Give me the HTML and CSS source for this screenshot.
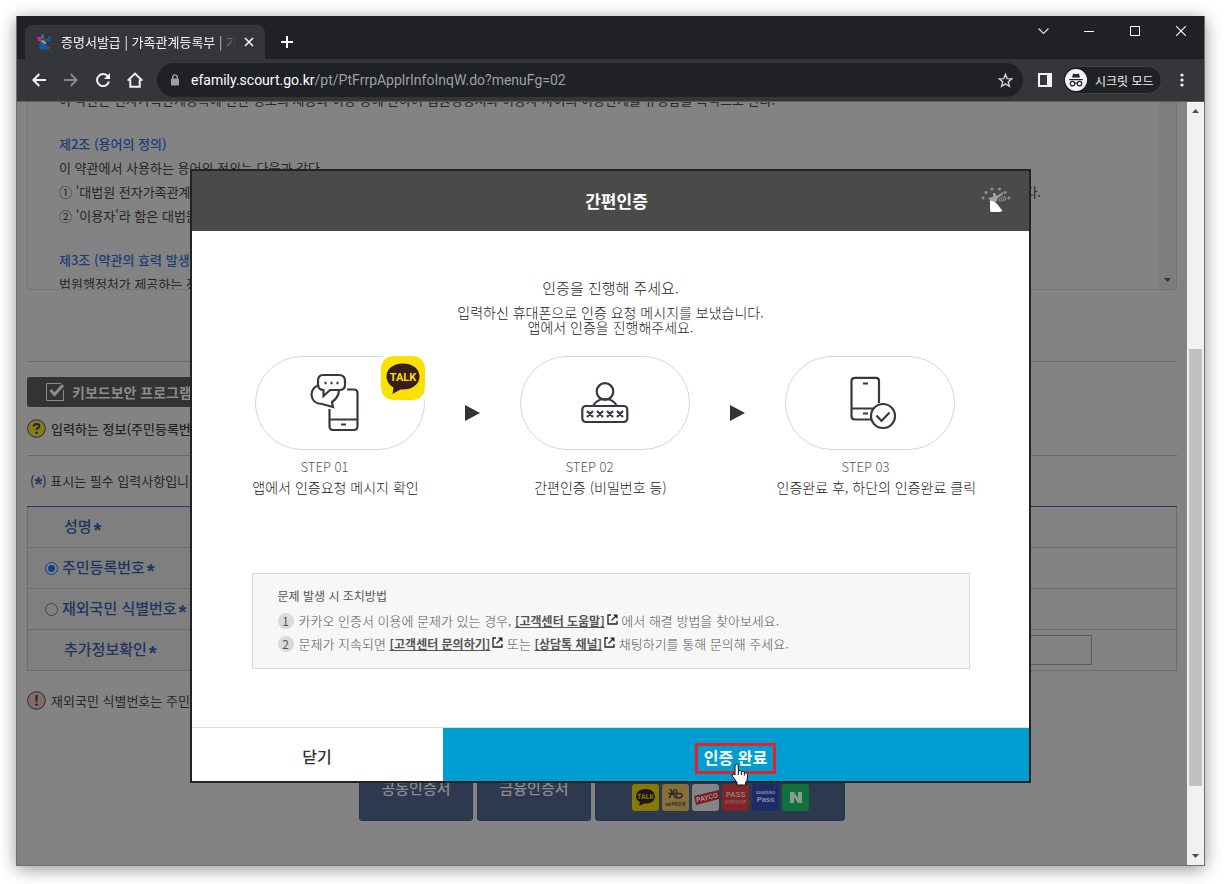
FILE: index.html
```html
<!DOCTYPE html>
<html lang="ko">
<head>
<meta charset="utf-8">
<title>증명서발급 | 가족관계등록부</title>
<link rel="stylesheet" href="styles.css">
</head>
<body>
<div class="desktop">
<div class="window">
  <header class="titlebar">
    <div class="tab">
      <svg class="favicon" width="16" height="16" viewBox="0 0 16 16"><path d="M3 8L7 8L9 11L12.500 13V15.500H3L2 12Z" fill="#0b5fa8"/><path d="M6 5L10 5L12 2L14 3L12 6L9 8Z" fill="#0b5fa8"/><path d="M12 1.500L14 4.500M10 6.500H14" stroke="#0b5fa8" stroke-width="1.200"/><path d="M0 3L4 3L5 7L1 7Z" fill="#e6178c"/><path d="M4 1L6.500 0L7 4L4.500 5Z" fill="#12908c"/><path d="M3.500 7L6 6L9.500 9L8.500 10.500Z" fill="#e88a55"/></svg>
      <span class="tab-title">증명서발급 | 가족관계등록부 | 가족</span>
      <button class="icon-btn tab-close" aria-label="탭 닫기"><svg width="10" height="10" viewBox="0 0 10 10" stroke="#f1f3f4" stroke-width="1.6"><path d="M1 1L9 9M9 1L1 9"/></svg></button>
    </div>
    <button class="icon-btn new-tab" aria-label="새 탭"><svg width="12" height="12" viewBox="0 0 12 12" stroke="#fff" stroke-width="2"><path d="M6 0V12M0 6H12"/></svg></button>
    <div class="caption-btns">
      <button class="icon-btn" aria-label="탭 검색"><svg width="11" height="7" viewBox="0 0 11 7" fill="none" stroke="#ddd" stroke-width="1.2"><path d="M.5 .5L5.5 5.5L10.5 .5"/></svg></button>
      <button class="icon-btn" aria-label="최소화"><svg width="10" height="10" viewBox="0 0 10 10" fill="#fff"><path d="M0 5H10V6H0Z"/></svg></button>
      <button class="icon-btn" aria-label="최대화"><svg width="10" height="10" viewBox="0 0 10 10" fill="none" stroke="#fff"><path d="M.5 .5H9.5V9.5H.5Z"/></svg></button>
      <button class="icon-btn" aria-label="닫기"><svg width="10" height="10" viewBox="0 0 10 10" stroke="#fff" stroke-width="1.1"><path d="M0 0L10 10M10 0L0 10"/></svg></button>
    </div>
  </header>
  <nav class="toolbar">
    <button class="icon-btn nav-btn" aria-label="뒤로"><svg width="14" height="14" viewBox="0 0 14 14" fill="none" stroke="#f1f3f4" stroke-width="2"><path d="M14 7H1.5M7.3 1L1.4 7L7.3 13"/></svg></button>
    <button class="icon-btn nav-btn" aria-label="앞으로"><svg width="14" height="14" viewBox="0 0 14 14" fill="none" stroke="#85868a" stroke-width="2"><path d="M0 7H12.5M6.7 1L12.6 7L6.7 13"/></svg></button>
    <button class="icon-btn nav-btn" aria-label="새로고침"><svg width="14" height="14" viewBox="0 0 14 14"><path d="M12 3.6A6 6 0 1 0 12.9 8.6" fill="none" stroke="#f1f3f4" stroke-width="2"/><path d="M14 0V6H8Z" fill="#f1f3f4"/></svg></button>
    <button class="icon-btn nav-btn" aria-label="홈"><svg width="16" height="16" viewBox="0 0 16 16" fill="none" stroke="#f1f3f4" stroke-width="2"><path d="M.7 8.6L8 1.6L15.3 8.6M3.3 7.5V14.8H12.7V7.5"/></svg></button>
    <div class="omnibox">
      <svg width="10" height="12" viewBox="0 0 10 12"><rect x="1" y="4.5" width="8" height="7" rx="1" fill="#9aa0a6"/><path d="M2.7 5V3.2a2.3 2.3 0 0 1 4.6 0V5" fill="none" stroke="#9aa0a6" stroke-width="1.4"/></svg>
      <span class="url"><b>efamily.scourt.go.kr</b>/pt/PtFrrpApplrInfoInqW.do?menuFg=02</span>
      <button class="icon-btn star" aria-label="북마크"><svg width="15" height="15" viewBox="0 0 15 15" fill="none" stroke="#d2d4d7" stroke-width="1.4"><path d="M7.5 1.4L9.2 5.6L13.8 5.9L10.3 8.8L11.4 13.3L7.5 10.9L3.6 13.3L4.7 8.8L1.2 5.9L5.8 5.6Z"/></svg></button>
    </div>
    <button class="icon-btn side" aria-label="측면 패널"><svg width="14" height="14" viewBox="0 0 14 14"><path d="M0 0H14V14H0ZM2 2V12H9V2Z" fill="#f1f3f4" fill-rule="evenodd"/></svg></button>
    <div class="incognito">
      <svg width="22" height="22" viewBox="0 0 22 22"><circle cx="11" cy="11" r="11" fill="#f1f3f4"/><path d="M7 8.5L8.2 4.6L10 5L11 5.2L12 5L13.8 4.6L15 8.5Z" fill="#202124"/><path d="M4.3 10.6H17.7" stroke="#202124" stroke-width="1.2"/><g fill="none" stroke="#202124" stroke-width="1.2"><circle cx="7.5" cy="14.6" r="2.3"/><circle cx="14.5" cy="14.6" r="2.3"/><path d="M9.8 14.4Q11 13.6 12.2 14.4"/></g></svg>
      <span>시크릿 모드</span>
    </div>
    <button class="icon-btn more" aria-label="메뉴"><svg width="4" height="14" viewBox="0 0 4 14" fill="#f1f3f4"><circle cx="2" cy="2" r="1.6"/><circle cx="2" cy="7" r="1.6"/><circle cx="2" cy="12" r="1.6"/></svg></button>
  </nav>

  <div class="viewport">
    <main class="page">
      <section class="terms">
        <div class="terms-text">
          <p class="first">이 약관은 전자가족관계등록에 관한 정보의 제공과 이용 등에 관하여 법원행정처와 이용자 사이의 이용관계를 규정함을 목적으로 한다.</p>
          <h3>제2조 (용어의 정의)</h3>
          <p>이 약관에서 사용하는 용어의 정의는 다음과 같다.</p>
          <p class="split"><span>① '대법원 전자가족관계등록시스템'이라 함은</span><span>말한다.</span></p>
          <p>② '이용자'라 함은 대법원 전자가족관계등록시스템을 이용하는 자를 말한다.</p>
          <h3>제3조 (약관의 효력 발생)</h3>
          <p>법원행정처가 제공하는 전자가족관계등록시스템</p>
        </div>
        <div class="terms-bar"><svg width="7" height="4" viewBox="0 0 7 4"><path d="M0 0H7L3.5 4Z" fill="#333"/></svg></div>
      </section>
      <hr>
      <button class="key-btn"><svg width="18" height="18" viewBox="0 0 18 18" fill="none"><path d="M15 .5H.5V17.5H17.5V7" stroke="#8c8c8c"/><path d="M4.5 7L8.5 11.5L17 2" stroke="#8c8c8c" stroke-width="3"/></svg>키보드보안 프로그램 설치/해제</button>
      <p class="notice strong"><svg width="19" height="19" viewBox="0 0 19 19"><circle cx="9.5" cy="9.5" r="8.8" fill="#857c20" stroke="#2b2b2b"/><path d="M6.6 7.4Q6.8 4.9 9.6 4.9Q12.4 5 12.3 7.2Q12.2 8.4 10.8 9.2Q9.6 9.9 9.6 11" fill="none" stroke="#222" stroke-width="2"/><circle cx="9.6" cy="13.7" r="1.2" fill="#222"/></svg>입력하는 정보(주민등록번호 등)</p>
      <hr class="second">
      <p class="required">(<span class="req">*</span>) 표시는 필수 입력사항입니다.</p>
      <table class="form">
        <tr><th class="plain" scope="row">성명<span class="req">*</span></th><td></td></tr>
        <tr><th scope="row"><input type="radio" name="idtype" id="id-rrn" checked><label for="id-rrn">주민등록번호<span class="req">*</span></label></th><td></td></tr>
        <tr><th scope="row"><input type="radio" name="idtype" id="id-over"><label for="id-over">재외국민 식별번호<span class="req">*</span></label></th><td></td></tr>
        <tr><th class="plain" scope="row"><label for="extra">추가정보확인<span class="req">*</span></label></th><td><input class="field" type="text" id="extra"></td></tr>
      </table>
      <p class="notice info"><svg width="19" height="19" viewBox="0 0 19 19"><circle cx="9.5" cy="9.5" r="8.8" fill="#856a6a" stroke="#2b2b2b"/><path d="M8.3 4.3H10.7L10.2 11.3H8.8Z" fill="#222"/><circle cx="9.5" cy="13.6" r="1.2" fill="#222"/></svg>재외국민 식별번호는 주민등록번호</p>
      <div class="cert-btns">
        <button class="cert">공동인증서</button>
        <button class="cert">금융인증서</button>
        <button class="cert wide">
          <svg width="27" height="27" viewBox="0 0 27 27"><rect width="27" height="27" rx="3" fill="#857a08"/><path d="M13.500 5C7.500 5 4 8.500 4 12.500Q4 16 8 18L7 22L12 19.500C19 20 23 17 23 12.500C23 8.500 19.500 5 13.500 5Z" fill="#221518"/><text x="13.500" y="15" font-size="7" class="logo" fill="#857a08">TALK</text></svg>
          <svg width="27" height="27" viewBox="0 0 27 27"><rect width="27" height="27" rx="3" fill="#857038"/><path d="M6 9.500H14M8 5L13.500 14M13 5L7 14M14.500 5.500V14M14.500 9.500H18Q20.500 10 20 12T17 14H14.500" fill="none" stroke="#302b24" stroke-width="1.500"/><text x="13.500" y="22" font-size="4" class="logo" fill="#302b24">KB국민은행</text></svg>
          <svg width="27" height="27" viewBox="0 0 27 27"><rect width="27" height="27" rx="3" fill="#858585"/><path d="M2 12L27 6V15L4 21Z" fill="#7c1b20"/><text x="15" y="16" font-size="7" class="logo" fill="#999" transform="rotate(-13 15 14)">PAYCO</text></svg>
          <svg width="27" height="27" viewBox="0 0 27 27"><rect width="27" height="27" rx="3" fill="#7d2529"/><text x="13.500" y="13" font-size="8" class="logo" fill="#9a7676">PASS</text><text x="13.500" y="20" font-size="4" class="logo thin" fill="#9a7676">휴대전화인증</text></svg>
          <svg width="27" height="27" viewBox="0 0 27 27"><rect width="27" height="27" rx="3" fill="#1d2b69"/><text x="13.500" y="10" font-size="4" class="logo" fill="#858ba0">SAMSUNG</text><text x="13.500" y="18" font-size="8" class="logo" fill="#858ba0">Pass</text></svg>
          <svg width="27" height="27" viewBox="0 0 27 27"><rect width="27" height="27" rx="3" fill="#11713c"/><path d="M8 8H12L16 14V8H20V19H16L12 13V19H8Z" fill="#8b9a90"/></svg>
        </button>
      </div>
    </main>
    <div class="scrollbar">
      <svg width="7" height="4" viewBox="0 0 7 4"><path d="M0 4H7L3.500 0Z" fill="#505050"/></svg>
      <div class="track"><div class="thumb"></div></div>
      <svg width="7" height="4" viewBox="0 0 7 4"><path d="M0 0H7L3.500 4Z" fill="#505050"/></svg>
    </div>

    <section class="modal" role="dialog" aria-label="간편인증">
      <header class="modal-head">
        <h2>간편인증</h2>
        <svg class="mark" width="30" height="28" viewBox="0 0 30 28"><path d="M9 15L13 16L17 20L21.500 26L19 27H9.500L9 24Z" fill="#fff"/><path d="M7 13L12 12L12 8L14.500 8L15 11L21 8L24 6.500L17 13L15 17L10 16Z" fill="#a5a5a5"/><g fill="#8f8f8f"><circle cx="2" cy="13" r="1.600"/><circle cx="5" cy="7.500" r="1.600"/><circle cx="11" cy="4" r="1.600"/><circle cx="18.500" cy="4" r="1.600"/><circle cx="24" cy="7.500" r="1.600"/><circle cx="28" cy="13" r="1.600"/></g><path d="M21 7V12M18 16L19.500 12L22 16ZM22 15L23.500 11L25 15Z" fill="none" stroke="#888"/></svg>
      </header>
      <div class="modal-body">
        <p class="lead">인증을 진행해 주세요.</p>
        <p class="sub">입력하신 휴대폰으로 인증 요청 메시지를 보냈습니다.<br>앱에서 인증을 진행해주세요.</p>
        <ol class="steps">
          <li class="step">
            <div class="pill send">
              <svg width="50" height="60" viewBox="0 0 50 60" fill="none" stroke="#343a40" stroke-width="2.200"><path d="M37 17.500H44Q47.500 17.500 47.500 21V54Q47.500 58 44 58H23Q19.500 58 19.500 54V37M19.500 47.500H47.500M31 52.500H36"/><path d="M13 3H29Q35 3 35 9V13Q35 18 29 18H20L13.500 24V18Q8 18 8 12V9Q8 3 13 3Z"/><path d="M8 13.500C4 15 1.500 18 1.500 23Q2.500 32 12 32L23 35L22 30Q28 26 29 19"/><path d="M14.500 11H16.500M20.500 11H22.500M26.500 11H28.500" stroke-width="2.500"/></svg>
              <svg class="talk" width="44" height="44" viewBox="0 0 44 44"><rect width="44" height="44" rx="12" fill="#fae100"/><path d="M22 7.500C12 7.500 5.500 13 5.500 20.500C5.500 25 8 29 12.500 31.500L11.500 38L19.500 33.500C30 34.500 38.500 29 38.500 20.500C38.500 13 32 7.500 22 7.500Z" fill="#371d1e"/><text x="22" y="25" font-size="11" class="logo" fill="#fae100">TALK</text></svg>
            </div>
            <p class="no">STEP 01</p><p class="desc">앱에서 인증요청 메시지 확인</p>
          </li>
          <li class="arrow"><svg width="15" height="16" viewBox="0 0 15 16"><path d="M0 0L15 8L0 16Z" fill="#333"/></svg></li>
          <li class="step">
            <div class="pill">
              <svg width="50" height="44" viewBox="0 0 50 44" fill="none" stroke="#343a40" stroke-width="2.200"><circle cx="25" cy="10.500" r="8.300"/><path d="M13.500 24.500Q17 18 25 18T36.500 24.500"/><rect x="2.300" y="25" width="45" height="16" rx="3.500"/><path d="M7 30L13 36M13 30L7 36M17 30L23 36M23 30L17 36M27 30L33 36M33 30L27 36M37 30L43 36M43 30L37 36"/></svg>
            </div>
            <p class="no">STEP 02</p><p class="desc">간편인증 (비밀번호 등)</p>
          </li>
          <li class="arrow"><svg width="15" height="16" viewBox="0 0 15 16"><path d="M0 0L15 8L0 16Z" fill="#333"/></svg></li>
          <li class="step">
            <div class="pill check">
              <svg width="48" height="54" viewBox="0 0 48 54" fill="none" stroke="#343a40" stroke-width="2.200"><path d="M22 43.500H6Q2.500 43.500 2.500 40V5Q2.500 1.800 6 1.800H27Q30 1.800 30 5V27M2.500 32.500H24M14 7.500H19M14 37.500H19"/><circle cx="34" cy="40" r="12"/><path d="M27.500 39.500L32.500 45L40.500 36.500"/></svg>
            </div>
            <p class="no">STEP 03</p><p class="desc">인증완료 후, 하단의 인증완료 클릭</p>
          </li>
        </ol>
        <div class="tips">
          <p class="tips-title">문제 발생 시 조치방법</p>
          <p class="tip"><span class="num">1</span>카카오 인증서 이용에 문제가 있는 경우, <a href="#">[고객센터 도움말]</a><svg class="ext" width="11" height="11" viewBox="0 0 11 11" fill="none" stroke="#222" stroke-width="1.300"><path d="M4 1H1V10H10V7M4.500 6.500L9 2"/><path d="M6 .5H10.500V5Z" fill="#222" stroke="none"/></svg> 에서 해결 방법을 찾아보세요.</p>
          <p class="tip"><span class="num">2</span>문제가 지속되면 <a href="#">[고객센터 문의하기]</a><svg class="ext" width="11" height="11" viewBox="0 0 11 11" fill="none" stroke="#222" stroke-width="1.300"><path d="M4 1H1V10H10V7M4.500 6.500L9 2"/><path d="M6 .5H10.500V5Z" fill="#222" stroke="none"/></svg> 또는 <a href="#">[상담톡 채널]</a><svg class="ext" width="11" height="11" viewBox="0 0 11 11" fill="none" stroke="#222" stroke-width="1.300"><path d="M4 1H1V10H10V7M4.500 6.500L9 2"/><path d="M6 .5H10.500V5Z" fill="#222" stroke="none"/></svg> 채팅하기를 통해 문의해 주세요.</p>
        </div>
      </div>
      <footer class="modal-foot">
        <button class="close">닫기</button>
        <button class="confirm"><span class="focus">인증 완료<svg class="cursor" width="18" height="23" viewBox="0 0 18 23"><path d="M5.500 1Q7.300 1 7.300 3V8Q9.500 6.800 10.300 8.600Q12.500 7.600 13.300 9.700Q16 9 16.500 11.500V15Q16 18 14.500 19.500V22H6V19.500L1.500 13.500Q.5 11.500 2 11Q3 10.800 4 12V3Q4 1 5.500 1Z" fill="#fff" stroke="#111"/><path d="M7.400 8V12M10.400 9V12M13.400 10V12.500" stroke="#111"/></svg></span></button>
      </footer>
    </section>
  </div>
</div>
</div>
</body>
</html>
```
FILE: styles.css
```css
* { box-sizing: border-box; }
body { margin: 0; background: #fff; font-family: "Noto Sans CJK KR", "Noto Sans", sans-serif; }
p, h2, h3, ol { margin: 0; padding: 0; }
button { font: inherit; border: 0; padding: 0; cursor: pointer; }
svg { display: block; flex: none; }
.logo { font-family: Roboto, "Noto Sans CJK KR", sans-serif; font-weight: 700; text-anchor: middle; }
.logo.thin { font-weight: 400; }

.desktop { display: flex; min-height: 100vh; padding: 16px 19px 18px 16px; }
.window { flex: 1; min-width: 0; display: flex; flex-direction: column; border: 1px solid #6e6e6e; border-top-width: 0; box-shadow: 0 3px 16px rgba(0, 0, 0, .42); }
.icon-btn { display: flex; align-items: center; justify-content: center; background: none; }

.titlebar { display: flex; height: 43px; padding-left: 8px; background: #202124; }
.tab { display: flex; align-items: center; width: 240px; margin-top: 9px; padding: 0 10px 0 12px; border-radius: 8px 8px 0 0; background: #35363a; color: #f1f3f4; }
.tab-title { flex: 1; margin-left: 8px; overflow: hidden; white-space: nowrap; font-size: 13px; line-height: 20px; -webkit-mask-image: linear-gradient(90deg, #000 88%, transparent); mask-image: linear-gradient(90deg, #000 88%, transparent); }
.tab-close { width: 12px; height: 16px; margin-left: 7px; }
.new-tab { width: 28px; height: 28px; margin: 12px 0 0 8px; }
.caption-btns { display: flex; height: 30px; margin-left: auto; }
.caption-btns .icon-btn { width: 46px; }

.toolbar { display: flex; align-items: center; height: 43px; padding: 0 14px 0 6px; border-bottom: 1px solid #5b5c5f; background: #35363a; color: #f1f3f4; }
.nav-btn { width: 32px; height: 32px; }
.omnibox { flex: 1; display: flex; align-items: center; height: 34px; margin-left: 6px; padding: 0 10px 0 13px; border-radius: 17px; background: #202124; color: #9aa0a6; }
.url { flex: 1; margin-left: 11px; font-family: Roboto, sans-serif; font-size: 14px; line-height: 20px; white-space: nowrap; }
.url b { font-weight: 400; color: #fff; }
.star { width: 16px; height: 20px; }
.side { width: 14px; height: 20px; margin: 0 10px 0 15px; }
.incognito { display: flex; align-items: center; gap: 8px; width: 100px; height: 28px; padding-left: 2px; border: 1px solid #414246; border-radius: 14px; background: #202124; font-size: 12px; white-space: nowrap; }
.more { width: 16px; height: 20px; margin-left: 12px; }

.viewport { position: relative; flex: 1; display: flex; overflow: hidden; }
.page { flex: 1; min-width: 0; padding: 0 10px 44px; background: #838383; color: #262626; font-size: 13px; }
.terms { display: flex; height: 188px; overflow: hidden; border: 1px solid #747474; border-top: 0; border-radius: 0 0 4px 4px; }
.terms-text { flex: 1; padding: 0 118px 0 31px; line-height: 24px; white-space: nowrap; }
.terms-text .first { margin: -14px 0 20px; }
.terms-text h3 { font-size: 13px; font-weight: 500; color: #173f78; }
.terms-text p + h3 { margin-top: 20px; }
.split { display: flex; justify-content: space-between; }
.terms-bar { display: flex; align-items: flex-end; justify-content: center; width: 17px; padding-bottom: 7px; background: #7d7d7d; }
hr { height: 1px; margin: 71px 0 15px; border: 0; background: #6a6a6a; }
hr.second { margin: 13px 0 0; }
.key-btn { display: flex; align-items: center; gap: 8px; width: 280px; height: 30px; padding-left: 19px; border-radius: 3px; background: #333; color: #8c8c8c; font-size: 14px; font-weight: 700; }
.notice { display: flex; align-items: center; gap: 5px; height: 28px; }
.notice.strong { margin-top: 7px; font-weight: 500; }
.notice.info { margin: 15px 0 46px; }
.required { padding-left: 3px; line-height: 50px; }
.req { margin-left: 2px; color: #1e3560; font-family: "Liberation Sans", sans-serif; font-size: 20px; font-weight: 700; line-height: 0; vertical-align: -5px; }
.required .req { margin: 0; }
.form { width: 100%; border-collapse: collapse; border: 1px solid #6c6c6c; border-top-color: #203a6c; }
.form tr { height: 41px; border-top: 1px solid #6c6c6c; }
.form tr:first-child { border-top-color: #203a6c; }
.form th { width: 190px; padding: 0 0 2px 17px; background: #7f7f7f; color: #1e3560; font-size: 15px; font-weight: 500; line-height: 22px; text-align: left; white-space: nowrap; }
.form th.plain { padding-left: 36px; }
.form td { padding: 0 84px 0 0; text-align: right; }
.form input[type="radio"] { appearance: none; width: 13px; height: 13px; margin: 0 4px 0 0; border: 1px solid #444; border-radius: 50%; vertical-align: -2px; }
.form input[type="radio"]:checked { border-color: #0b4186; background: radial-gradient(circle, #0b4186 0 3px, transparent 4px); }
.field { display: inline-block; width: 300px; height: 30px; border: 1px solid #5c5c5c; background: #838383; vertical-align: middle; }
.cert-btns { display: flex; justify-content: center; gap: 4px; }
.cert { width: 114px; height: 61px; padding-bottom: 6px; border: 1px solid #26344f; border-radius: 3px; background: #2d394f; color: #8b8b8b; font-size: 15px; font-weight: 500; }
.cert.wide { display: flex; align-items: flex-end; justify-content: center; gap: 3px; width: 250px; padding-bottom: 9px; }

.scrollbar { display: flex; flex-direction: column; align-items: center; width: 17px; padding: 7px 0; background: #f1f1f1; }
.track { flex: 1; width: 13px; margin: 6px 0; }
.thumb { height: 60%; margin-top: 230px; background: #c1c1c1; }

.modal { position: absolute; top: 67px; left: 50%; width: 841px; margin-left: -421px; border: 2px solid #232323; background: #fff; color: #222; }
.modal-head { display: flex; align-items: center; justify-content: center; position: relative; height: 60px; background: #4a4a4a; color: #fff; }
.modal-head h2 { padding-left: 13px; font-size: 17px; font-weight: 700; line-height: 24px; }
.mark { position: absolute; right: 18px; top: 14px; }
.modal-body { padding: 45px 59px 58px 60px; }
.lead { font-size: 15px; font-weight: 300; line-height: 24px; text-align: center; }
.sub { margin-top: 5px; font-size: 14px; font-weight: 300; line-height: 15px; text-align: center; }
.steps { display: flex; justify-content: space-between; margin-top: 21px; padding: 0 15px 0 3px; list-style: none; }
.step { width: 170px; font-weight: 300; text-align: center; }
.pill { display: flex; align-items: center; justify-content: center; position: relative; height: 94px; margin-bottom: 7px; border: 1px solid #d6d6d6; border-radius: 47px; }
.pill.send { padding: 0 10px 2px 0; }
.pill.check { padding-left: 6px; }
.pill .talk { position: absolute; top: -1px; right: -1px; border-radius: 12px; box-shadow: 0 0 0 3px #fff; }
.no { padding-right: 22px; margin-left: -8px; color: #555; font-size: 13px; line-height: 20px; }
.step:last-child .no { padding-right: 0; }
.desc { margin-left: -8px; font-size: 14px; line-height: 20px; white-space: nowrap; }
.arrow { padding-top: 49px; }
.tips { margin-top: 76px; padding: 10px 25px 13px; border: 1px solid #d9d9d9; background: #f7f7f7; color: #555; }
.tips-title { margin-bottom: 2px; font-size: 12px; line-height: 23px; }
.tip { font-size: 13px; font-weight: 300; line-height: 23px; }
.tip a { color: #555; font-size: 12px; font-weight: 700; }
.num { display: inline-block; width: 16px; height: 16px; margin-right: 5px; border-radius: 50%; background: #dadada; font-size: 12px; font-weight: 400; line-height: 16px; text-align: center; }
.ext { display: inline-block; margin-left: 2px; vertical-align: 1px; }
.modal-foot { display: flex; border-top: 1px solid #ddd; }
.modal-foot button { height: 53px; font-size: 16px; }
.close { width: 30%; padding-top: 3px; background: #fff; color: #333; font-weight: 500; }
.modal-foot .confirm { flex: 1; padding-top: 7px; background: #009dd1; color: #fff; font-weight: 700; }
.focus { display: inline-block; position: relative; padding: 0 6px 2px; border: 3px solid #e8202a; line-height: 23px; }
.cursor { position: absolute; left: 33px; top: 17px; }
```
